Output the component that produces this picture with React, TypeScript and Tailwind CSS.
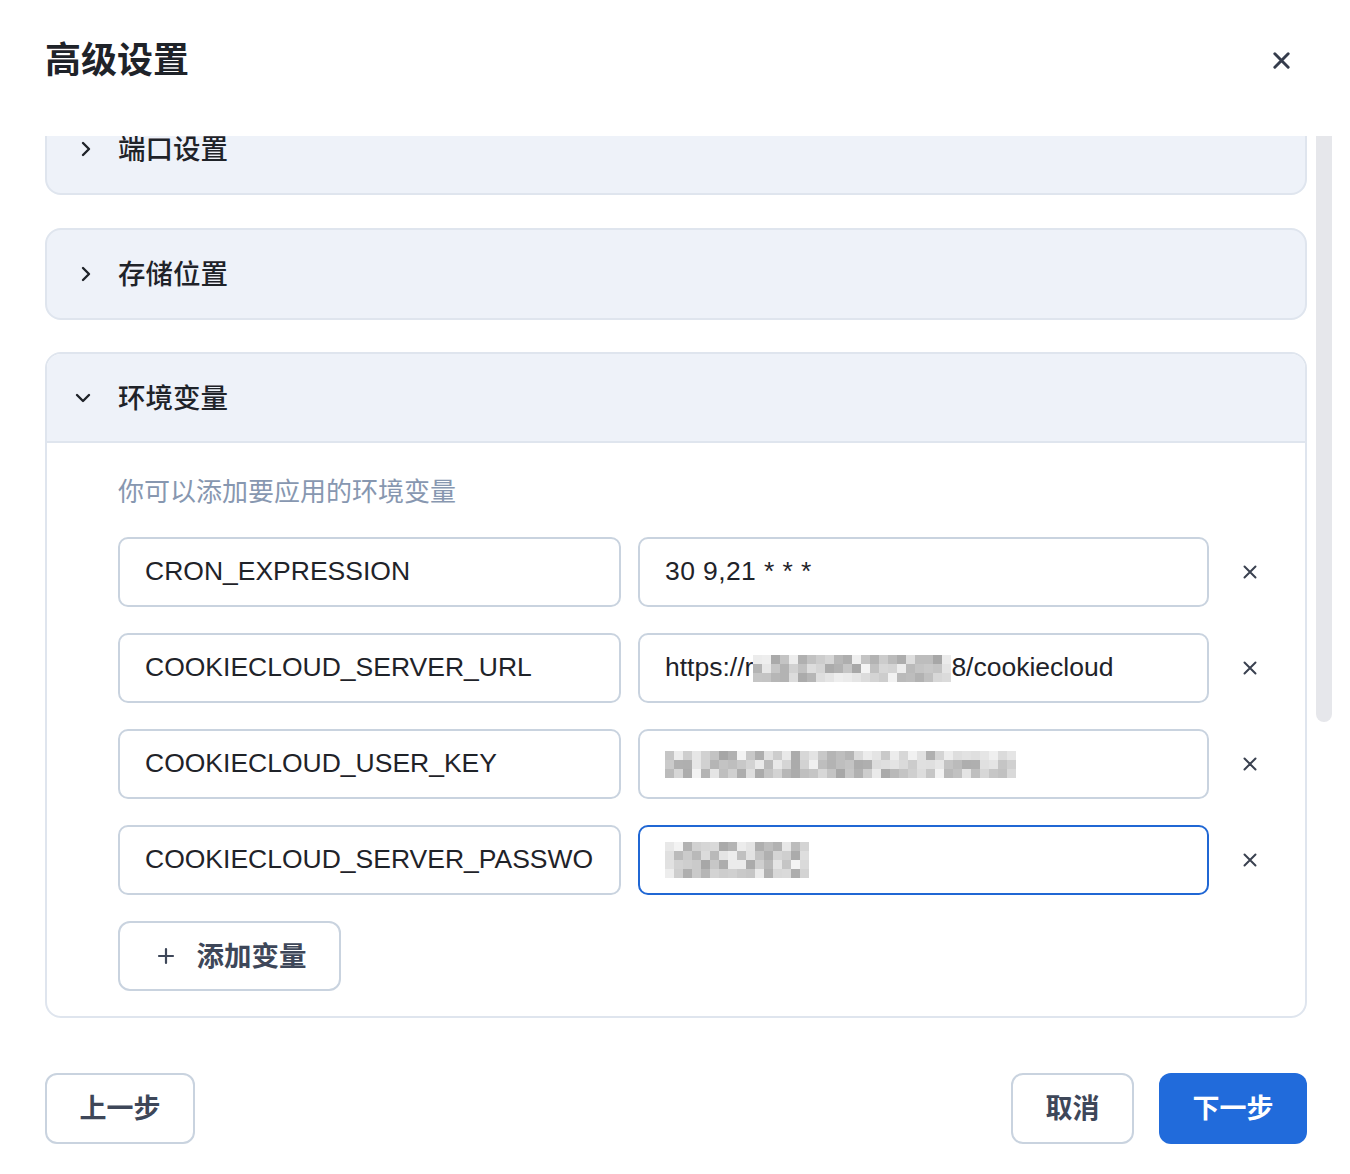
import React from "react";

const cjk = "font-['Noto_Sans','Noto_Sans_CJK_SC',sans-serif]";
const latin = "font-['Liberation_Sans','Noto_Sans_CJK_SC',sans-serif]";

// pixelated (blurred-out) secret values
function Mosaic({ cols, rows, seed, size = 9 }: { cols: number; rows: number; seed: number; size?: number }) {
  const cells: string[] = [];
  let s = seed;
  for (let i = 0; i < cols * rows; i++) {
    s = (s * 9301 + 49297) % 233280;
    const v = 165 + Math.floor((s / 233280) * 80);
    cells.push(`rgb(${v},${v},${v})`);
  }
  return (
    <span
      className="inline-grid align-middle"
      style={{ gridTemplateColumns: `repeat(${cols}, ${size}px)`, gridAutoRows: `${size}px` }}
    >
      {cells.map((c, i) => (
        <span key={i} style={{ backgroundColor: c }} />
      ))}
    </span>
  );
}

function Chevron({ open }: { open?: boolean }) {
  return (
    <svg width="20" height="20" viewBox="0 0 20 20" fill="none" stroke="#1f2329" strokeWidth="2.4" strokeLinecap="round" strokeLinejoin="round">
      {open ? <path d="M4 7l6 6 6-6" /> : <path d="M7 4l6 6-6 6" />}
    </svg>
  );
}

function XIcon({ size = 14, color = "#3a4150", w = 2 }: { size?: number; color?: string; w?: number }) {
  return (
    <svg width={size} height={size} viewBox="0 0 14 14" fill="none" stroke={color} strokeWidth={w} strokeLinecap="round">
      <path d="M1.5 1.5l11 11M12.5 1.5l-11 11" />
    </svg>
  );
}

function Collapsed({ title }: { title: string }) {
  return (
    <div className="rounded-[16px] border-2 border-[#dfe5ee] bg-[#eef2f9]">
      <div className="h-[88px] flex items-center pl-[29px]">
        <Chevron />
        <span className={`ml-[22px] text-[27.5px] font-medium text-[#1f2329] ${cjk}`}>{title}</span>
      </div>
    </div>
  );
}

const rows = [
  { key: "CRON_EXPRESSION", value: <span className="tracking-[0.4px]">30 9,21 * * *</span> },
  {
    key: "COOKIECLOUD_SERVER_URL",
    value: (
      <span className="flex items-center">
        https://r
        <Mosaic cols={22} rows={3} seed={17} />
        8/cookiecloud
      </span>
    ),
  },
  { key: "COOKIECLOUD_USER_KEY", value: <Mosaic cols={39} rows={3} seed={5} /> },
  { key: "COOKIECLOUD_SERVER_PASSWO", value: <Mosaic cols={16} rows={4} seed={41} />, focus: true },
];

export default function App() {
  return (
    <div className="w-[1350px] h-[1174px] bg-white overflow-hidden flex flex-col">
      {/* header */}
      <div className="h-[136px] flex items-start justify-between pl-[45px] pr-[60px] pt-[36px]">
        <h1 className={`text-[36px] leading-[48px] font-bold text-[#1f2329] ${cjk}`}>高级设置</h1>
        <button className="mt-[16px]">
          <XIcon size={17} color="#353c4c" w={2.4} />
        </button>
      </div>

      {/* scroll area */}
      <div className="h-[905px] flex overflow-hidden">
        <div className="w-[1262px] ml-[45px] flex flex-col gap-[33px] -mt-[33px]">
          <Collapsed title="端口设置" />
          <Collapsed title="存储位置" />

          <div className="-mt-[1px] rounded-[16px] border-2 border-[#dfe5ee] bg-white overflow-hidden">
            <div className="h-[89px] flex items-center pl-[26px] bg-[#eef2f9] border-b-2 border-[#dfe5ee]">
              <Chevron open />
              <span className={`ml-[25px] text-[27.5px] font-medium text-[#1f2329] ${cjk}`}>环境变量</span>
            </div>
            <div className="pt-[32px] pl-[71px] pb-[25px]">
              <p className={`text-[26px] leading-[32px] text-[#8797b0] ${cjk}`}>你可以添加要应用的环境变量</p>
              <div className="mt-[30px] flex flex-col gap-[26px]">
                {rows.map((r) => (
                  <div key={r.key} className="flex items-center">
                    <div className={`w-[503px] h-[70px] rounded-[10px] border-2 border-[#c9d3df] flex items-center pl-[25px] text-[26.5px] text-[#1f2329] whitespace-nowrap overflow-hidden ${latin}`}>
                      {r.key}
                    </div>
                    <div
                      className={`ml-[17px] w-[571px] h-[70px] rounded-[10px] border-2 flex items-center pl-[25px] text-[26.5px] text-[#1f2329] whitespace-nowrap overflow-hidden ${latin} ${
                        r.focus ? "border-[#2067d4]" : "border-[#c9d3df]"
                      }`}
                    >
                      {r.value}
                    </div>
                    <div className="w-[82px] flex justify-center">
                      <XIcon />
                    </div>
                  </div>
                ))}
              </div>
              <button className="mt-[26px] w-[223px] h-[70px] rounded-[12px] border-2 border-[#c9d3df] flex items-center justify-center gap-[22px] pl-[4px] text-[#3e4759]">
                <svg width="18" height="18" viewBox="0 0 18 18" fill="none" stroke="#3e4759" strokeWidth="2.2" strokeLinecap="round">
                  <path d="M9 2v14M2 9h14" />
                </svg>
                <span className={`text-[27.5px] font-semibold ${cjk}`}>添加变量</span>
              </button>
            </div>
          </div>
        </div>
        {/* scrollbar */}
        <div className="ml-[9px] w-[16px]">
          <div className="h-[586px] w-full bg-[#e6e7eb] rounded-b-full" />
        </div>
      </div>

      {/* footer */}
      <div className="pt-[32px] pl-[45px] pr-[43px] flex items-center justify-between">
        <button className={`w-[150px] h-[71px] rounded-[12px] border-2 border-[#c9d3df] text-[27px] font-semibold text-[#3e4759] ${cjk}`}>
          上一步
        </button>
        <div className="flex items-center gap-[25px]">
          <button className={`w-[123px] h-[71px] rounded-[12px] border-2 border-[#c9d3df] text-[27px] font-semibold text-[#3e4759] ${cjk}`}>
            取消
          </button>
          <button className={`w-[148px] h-[71px] rounded-[12px] bg-[#216bdb] text-[27px] font-semibold text-white ${cjk}`}>
            下一步
          </button>
        </div>
      </div>
    </div>
  );
}
